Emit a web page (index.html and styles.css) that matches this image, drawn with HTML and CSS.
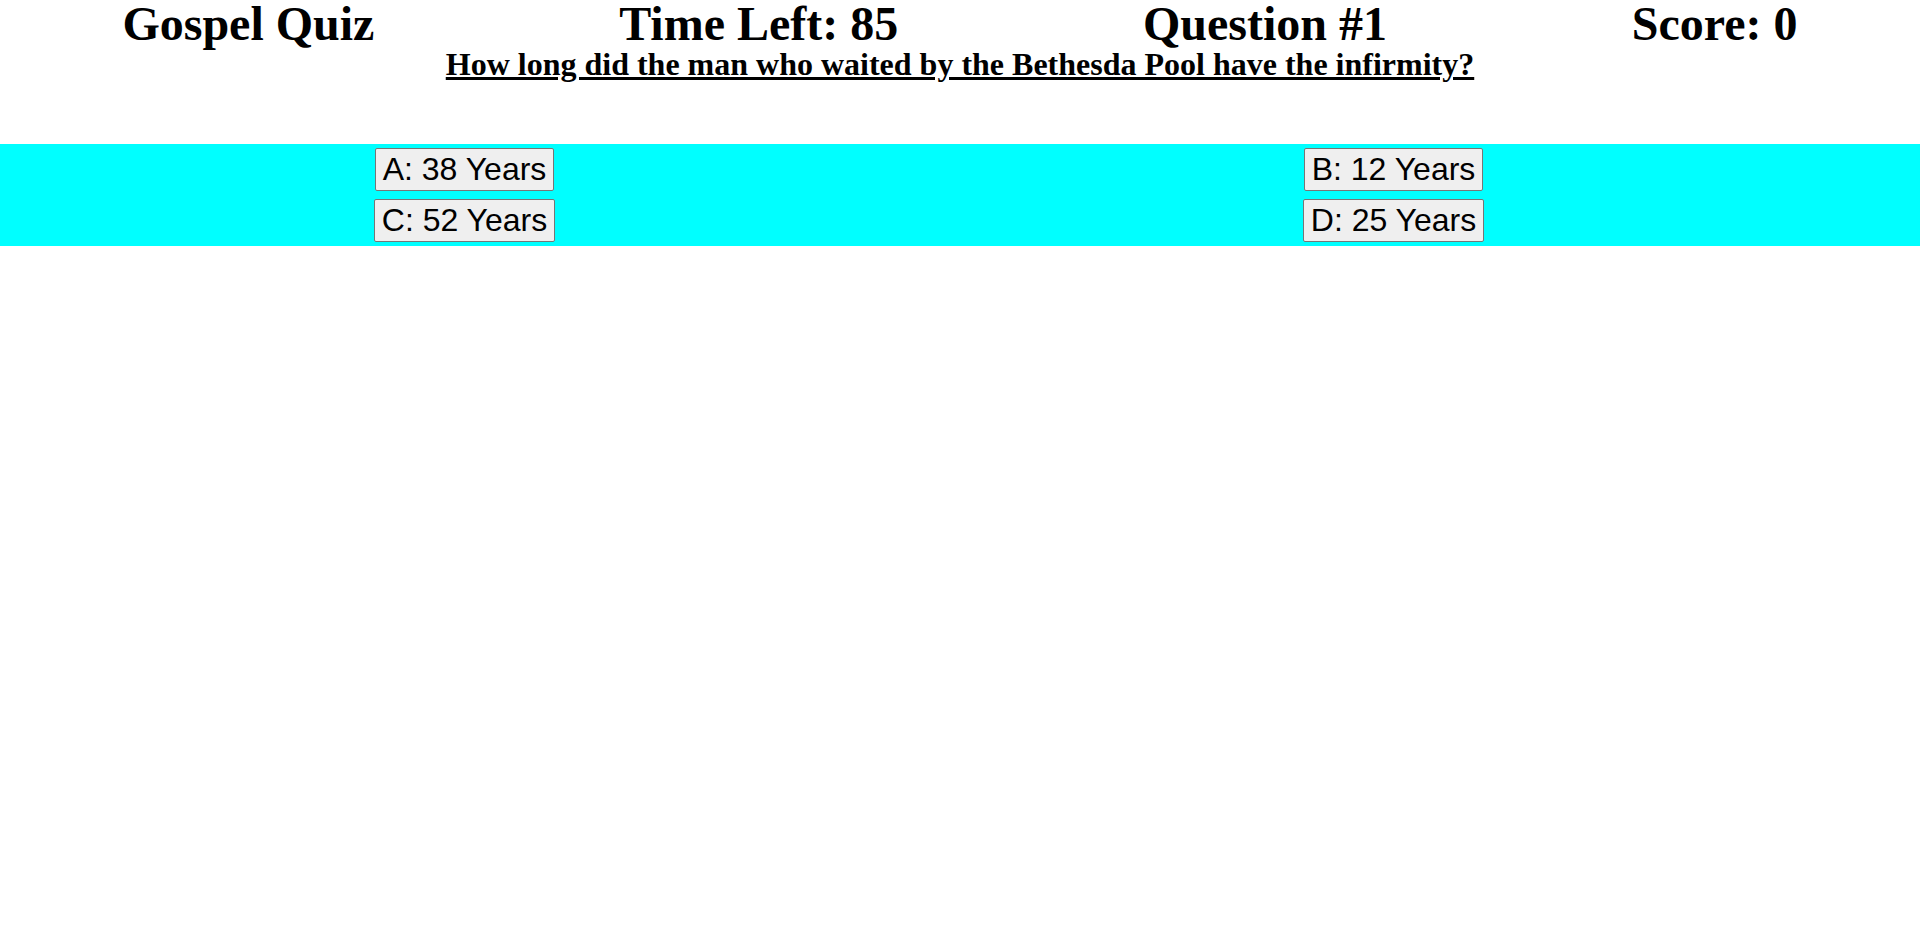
FILE: index.html
```html
<!DOCTYPE html>
<html>
<head>
<meta charset="utf-8">
<title>Gospel Quiz</title>
<link rel="stylesheet" href="styles.css">
</head>
<body>
<header class="topbar">
  <h1 class="stat">Gospel Quiz</h1>
  <h1 class="stat">Time Left: 85</h1>
  <h1 class="stat">Question #1</h1>
  <h1 class="stat">Score: 0</h1>
</header>
<h2 class="question">How long did the man who waited by the Bethesda Pool have the infirmity?</h2>
<div class="answers">
  <div class="cell"><button class="answer">A: 38 Years</button></div>
  <div class="cell"><button class="answer">B: 12 Years</button></div>
  <div class="cell"><button class="answer">C: 52 Years</button></div>
  <div class="cell"><button class="answer">D: 25 Years</button></div>
</div>
</body>
</html>
```
FILE: styles.css
```css
html, body {
  margin: 0;
  padding: 0;
  background: #ffffff;
  color: #000000;
  font-family: "Liberation Serif", "Times New Roman", serif;
}

.topbar {
  display: flex;
  justify-content: space-around;
  align-items: baseline;
}

.stat {
  margin: 0;
  font-size: 48px;
  font-weight: bold;
  line-height: 48px;
}

.question {
  margin: 0;
  text-align: center;
  font-size: 32px;
  font-weight: bold;
  line-height: 32px;
  text-decoration: underline;
  text-decoration-thickness: 3px;
}

.answers {
  margin-top: 64px;
  background: #00ffff;
  display: grid;
  grid-template-columns: 929px 929px;
  justify-items: center;
  row-gap: 8px;
  padding: 4px 0;
}

.answer {
  font-family: "Liberation Sans", Arial, sans-serif;
  font-size: 32px;
  line-height: 37px;
  color: #000000;
  background: #efefef;
  border: 1px solid #767676;
  border-radius: 2px;
  padding: 2px 7px;
  margin: 0;
}
```
